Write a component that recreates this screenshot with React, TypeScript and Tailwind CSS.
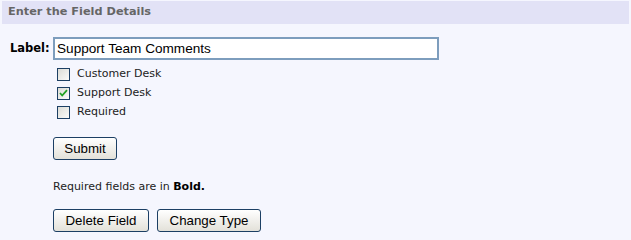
import React from "react";

function Box({ checked }: { checked?: boolean }) {
  return (
    <span className="relative inline-block w-[13px] h-[13px] border border-[#1c3f64] bg-gradient-to-br from-[#dcdcd6] to-[#fbfbf9] shrink-0">
      {checked && (
        <svg viewBox="0 0 11 11" className="absolute left-0 top-0 w-[11px] h-[11px]">
          <path d="M2 5 L4.2 7.5 L9 2.2" fill="none" stroke="#21a121" strokeWidth="1.8" />
        </svg>
      )}
    </span>
  );
}

function Btn({ children, w }: { children: React.ReactNode; w: string }) {
  return (
    <button
      className={`${w} h-[23px] rounded-[3px] border border-[#1c3f64] bg-gradient-to-b from-[#ffffff] to-[#e3e1d9] text-[13.3px] text-black leading-none flex items-center justify-center`}
      style={{ fontFamily: '"Liberation Sans", Arial, sans-serif' }}
    >
      {children}
    </button>
  );
}

export default function App() {
  return (
    <div
      className="w-[631px] h-[240px] bg-[#f5f6fe] pt-px overflow-hidden text-[11px] text-[#222]"
      style={{ fontFamily: '"DejaVu Sans", Verdana, sans-serif' }}
    >
      <div className="mx-[2px] h-[23px] bg-[#e2e2f6] pl-[6px] flex items-center text-[11.3px] font-bold text-[#666]">
        Enter the Field Details
      </div>
      <div className="mt-[13px] flex items-center">
        <span className="ml-[10px] w-[43px] font-bold text-black pt-[1px] text-[11.5px]">Label:</span>
        <input
          defaultValue="Support Team Comments"
          className="w-[386px] h-[23px] border-2 border-[#7d9dbd] bg-white px-[2px] text-[13.6px] text-black outline-none"
          style={{ fontFamily: '"Liberation Sans", Arial, sans-serif' }}
        />
      </div>
      <div className="ml-[57px] mt-[8px] flex flex-col gap-[6px]">
        <label className="flex items-center gap-[7px] h-[13px]">
          <Box />
          <span>Customer Desk</span>
        </label>
        <label className="flex items-center gap-[7px] h-[13px]">
          <Box checked />
          <span>Support Desk</span>
        </label>
        <label className="flex items-center gap-[7px] h-[13px]">
          <Box />
          <span>Required</span>
        </label>
      </div>
      <div className="ml-[53px] mt-[18px]">
        <Btn w="w-[64px]">Submit</Btn>
      </div>
      <div className="ml-[53px] mt-[20px] h-[14px] leading-[14px]">
        Required fields are in <b className="text-black">Bold.</b>
      </div>
      <div className="ml-[53px] mt-[15px] flex gap-[8px]">
        <Btn w="w-[96px]">Delete Field</Btn>
        <Btn w="w-[104px]">Change Type</Btn>
      </div>
    </div>
  );
}
